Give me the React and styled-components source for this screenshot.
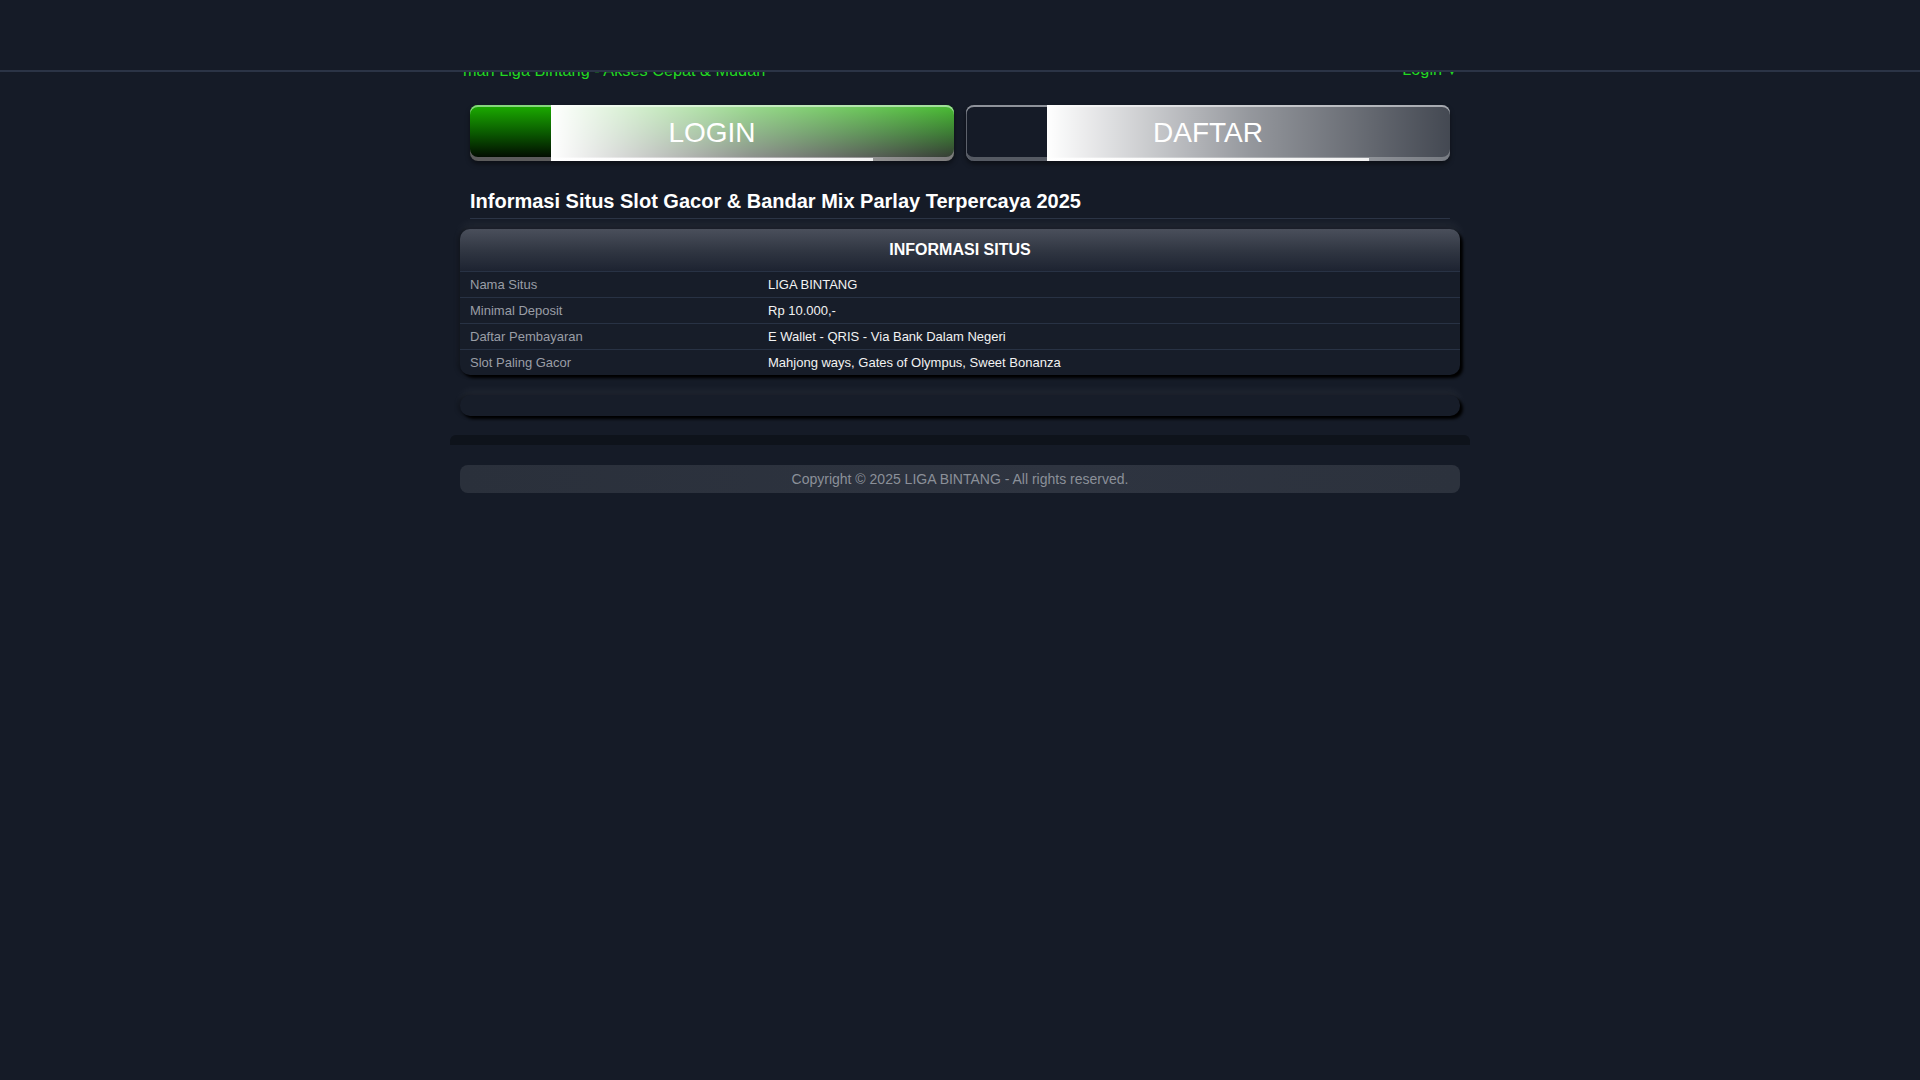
import React from "react";
import styled, { createGlobalStyle } from "styled-components";

const GlobalStyle = createGlobalStyle`
  html, body {
    margin: 0;
    padding: 0;
    background: #151b27;
    font-family: "Liberation Sans", Arial, sans-serif;
    color: #ffffff;
  }
  * { box-sizing: border-box; }
`;

const Header = styled.header`
  position: fixed;
  top: 0;
  left: 0;
  right: 0;
  height: 72px;
  background: #151b27;
  border-bottom: 2px solid #2b3446;
  z-index: 10;
`;

const Page = styled.main`
  width: 1000px;
  margin: 0 auto;
  padding-top: 60px;
`;

const TopBar = styled.div`
  display: flex;
  justify-content: space-between;
  align-items: center;
  height: 20px;
  line-height: 20px;
  padding: 0 3px 0 3px;
  font-size: 16.3px;
  color: #22d822;
`;

const TopLink = styled.a`
  color: #22d822;
  text-decoration: none;
  white-space: nowrap;
`;

const Caret = styled.span`
  font-size: 10px;
  margin-left: 5px;
`;

const ButtonRow = styled.div`
  display: grid;
  grid-template-columns: 1fr 1fr;
  gap: 12px;
  padding: 0 10px;
  margin-top: 25px;
`;

const BigButton = styled.a`
  position: relative;
  display: flex;
  align-items: center;
  justify-content: center;
  height: 56px;
  border-radius: 8px;
  overflow: hidden;
  text-decoration: none;
  color: #ffffff;
  font-size: 28px;
  background: ${(p) =>
    p.$variant === "login"
      ? "linear-gradient(to bottom, #1cae00 0%, #0a5a00 50%, #000000 100%)"
      : "#151b27"};
  box-shadow: ${(p) =>
    p.$variant === "login"
      ? "inset 0 2px 0 #86d67e, inset 0 -4px 0 #5b5b5b, 0 3px 5px rgba(0,0,0,0.45)"
      : "inset 0 2px 0 #8e929a, inset 1px 0 0 #5d626c, inset 0 -4px 0 #555a63, 0 3px 5px rgba(0,0,0,0.45)"};
`;

const Shine = styled.span`
  position: absolute;
  top: 0;
  bottom: 0;
  left: 81px;
  right: 0;
  background: linear-gradient(
    to right,
    #ffffff 0%,
    rgba(255, 255, 255, 0.82) 20%,
    rgba(255, 255, 255, 0.55) 50%,
    rgba(255, 255, 255, 0.2) 100%
  );
`;

const ShineBar = styled.span`
  position: absolute;
  bottom: 0;
  left: 81px;
  width: 322px;
  height: 3px;
  background: linear-gradient(to right, #ffffff, #f2f2f2);
`;

const ButtonLabel = styled.span`
  position: relative;
  z-index: 1;
`;

const Heading = styled.h1`
  margin: 28px 10px 0;
  padding: 0 0 5px;
  font-size: 20px;
  line-height: 24px;
  font-weight: 700;
  color: #ffffff;
  border-bottom: 1px solid #2a3344;
`;

const InfoTable = styled.section`
  margin-top: 10px;
  border-radius: 10px;
  overflow: hidden;
  background: #171d29;
  box-shadow: 3px 3px 3px #000000, -2px 0 4px rgba(0, 0, 0, 0.35),
    0 -6px 10px rgba(255, 255, 255, 0.05);
`;

const TableHead = styled.div`
  height: 42px;
  display: flex;
  align-items: center;
  justify-content: center;
  font-size: 16px;
  font-weight: 700;
  color: #ffffff;
  background: linear-gradient(to bottom, #4a4f5b 0%, #2f3541 55%, #1d2331 100%);
`;

const Row = styled.div`
  display: grid;
  grid-template-columns: 298px 1fr;
  height: 26px;
  align-items: center;
  border-top: 1px solid #283244;
  font-size: 13px;
`;

const Label = styled.div`
  padding: 0 10px;
  color: #9a9ea6;
`;

const Value = styled.div`
  padding: 0 10px;
  color: #f2f2f2;
`;

const EmptyBox = styled.div`
  margin-top: 20px;
  height: 21px;
  border-radius: 10px;
  background: #171d29;
  box-shadow: 3px 3px 3px #000000, -2px 0 4px rgba(0, 0, 0, 0.3),
    0 -5px 8px rgba(255, 255, 255, 0.05);
`;

const Strip = styled.div`
  margin: 19px -10px 0;
  height: 10px;
  border-radius: 6px 6px 0 0;
  background: #0e131b;
`;

const Footer = styled.footer`
  margin-top: 20px;
  height: 28px;
  line-height: 28px;
  border-radius: 8px;
  background: linear-gradient(to right, #2a303b, #2e3440 60%, #2c323d);
  text-align: center;
  font-size: 14px;
  color: #8b9099;
`;

const rows = [
  ["Nama Situs", "LIGA BINTANG"],
  ["Minimal Deposit", "Rp 10.000,-"],
  ["Daftar Pembayaran", "E Wallet - QRIS - Via Bank Dalam Negeri"],
  ["Slot Paling Gacor", "Mahjong ways, Gates of Olympus, Sweet Bonanza"],
];

export default function App() {
  return (
    <>
      <GlobalStyle />
      <Header />
      <Page>
        <TopBar>
          <TopLink href="#">mah Liga Bintang - Akses Cepat &amp; Mudah</TopLink>
          <TopLink href="#">
            Login<Caret>▼</Caret>
          </TopLink>
        </TopBar>
        <ButtonRow>
          <BigButton href="#" $variant="login">
            <Shine />
            <ShineBar />
            <ButtonLabel>LOGIN</ButtonLabel>
          </BigButton>
          <BigButton href="#" $variant="daftar">
            <Shine />
            <ShineBar />
            <ButtonLabel>DAFTAR</ButtonLabel>
          </BigButton>
        </ButtonRow>
        <Heading>Informasi Situs Slot Gacor &amp; Bandar Mix Parlay Terpercaya 2025</Heading>
        <InfoTable>
          <TableHead>INFORMASI SITUS</TableHead>
          {rows.map(([k, v]) => (
            <Row key={k}>
              <Label>{k}</Label>
              <Value>{v}</Value>
            </Row>
          ))}
        </InfoTable>
        <EmptyBox />
        <Strip />
        <Footer>Copyright © 2025 LIGA BINTANG - All rights reserved.</Footer>
      </Page>
    </>
  );
}
